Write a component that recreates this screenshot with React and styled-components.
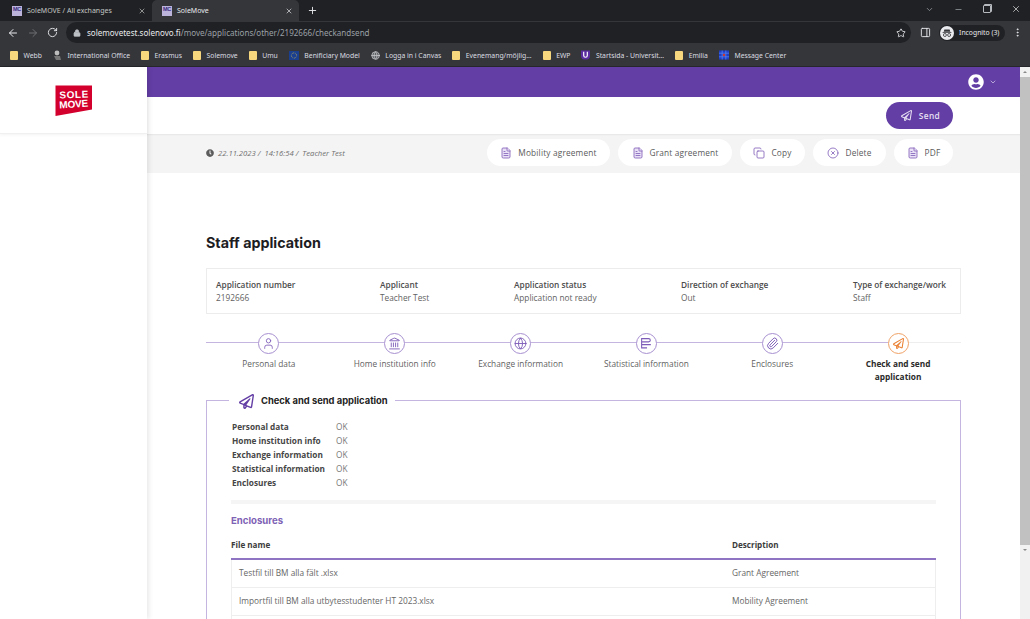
import React from 'react'
import styled, { createGlobalStyle } from 'styled-components'
import {
  ArrowLeft, ArrowRight, RotateCw, Star, Plus, X, Minus, ChevronDown, MoreVertical, Lock, Globe,
  FileText, Copy, CircleX, User, Landmark, Paperclip, PanelRight,
} from 'lucide-react'
import { FaRegPaperPlane, FaUserCircle, FaClock } from 'react-icons/fa'

const purple = '#633ea5'
const purpleLine = '#c4b5e0'

const bookmarks = [
  { name: 'Webb', icon: 'folder' },
  { name: 'International Office', icon: 'office' },
  { name: 'Erasmus', icon: 'folder' },
  { name: 'Solemove', icon: 'folder' },
  { name: 'Umu', icon: 'folder' },
  { name: 'Benificiary Model', icon: 'eu' },
  { name: 'Logga in i Canvas', icon: 'globe' },
  { name: 'Evenemang/möjlig...', icon: 'folder' },
  { name: 'EWP', icon: 'folder' },
  { name: 'Startsida - Universit...', icon: 'shield' },
  { name: 'Emilia', icon: 'folder' },
  { name: 'Message Center', icon: 'grid' },
]

const infoFields = [
  ['Application number', '2192666'],
  ['Applicant', 'Teacher Test'],
  ['Application status', 'Application not ready'],
  ['Direction of exchange', 'Out'],
  ['Type of exchange/work', 'Staff'],
]

const checks = ['Personal data', 'Home institution info', 'Exchange information', 'Statistical information', 'Enclosures']

const files = [
  ['Testfil till BM alla fält .xlsx', 'Grant Agreement'],
  ['Importfil till BM alla utbytesstudenter HT 2023.xlsx', 'Mobility Agreement'],
  ['', ''],
]

const actions = [
  { label: 'Mobility agreement', Icon: FileText, width: 123, fill: '#e9e2f6' },
  { label: 'Grant agreement', Icon: FileText, width: 114, fill: '#e9e2f6' },
  { label: 'Copy', Icon: Copy, width: 65, fill: 'none' },
  { label: 'Delete', Icon: CircleX, width: 73, fill: 'none' },
  { label: 'PDF', Icon: FileText, width: 59, fill: '#e9e2f6' },
]

function StatsIcon() {
  return (
    <svg width="13" height="13" viewBox="0 0 12 12" fill="none" stroke="currentColor" strokeWidth="1">
      <path d="M1.5 1.5h6.5a1.2 1.2 0 0 1 0 3H1.5zM1.5 4.5v6M1.5 7h8.5M1.5 10h5" />
    </svg>
  )
}

const steps = [
  { label: 'Personal data', Icon: () => <User size={13} strokeWidth={1.6} /> },
  { label: 'Home institution info', Icon: () => <Landmark size={13} strokeWidth={1.7} /> },
  { label: 'Exchange information', Icon: () => <Globe size={13} strokeWidth={1.7} /> },
  { label: 'Statistical information', Icon: StatsIcon },
  { label: 'Enclosures', Icon: () => <Paperclip size={13} strokeWidth={1.8} /> },
  { label: 'Check and send application', Icon: () => <FaRegPaperPlane size={11} />, current: true },
]

function Favicon() {
  return <FaviconBox>MC</FaviconBox>
}

function BookmarkIcon({ kind }) {
  if (kind === 'folder') return <FolderIcon />
  if (kind === 'globe') return <Globe size={9} color="#c9cacc" fill="#5f6368" />
  if (kind === 'office') {
    return (
      <svg width="9" height="11" viewBox="0 0 9 11" fill="#bdbdbd">
        <circle cx="4" cy="3" r="2.4" />
        <path d="M1 6h6l1 4H3z" fill="#777" />
      </svg>
    )
  }
  if (kind === 'eu') {
    return (
      <svg width="10" height="9" viewBox="0 0 10 9">
        <rect width="10" height="9" fill="#1b3f8f" />
        <circle cx="5" cy="4.5" r="2.6" fill="none" stroke="#d8c24a" strokeWidth="0.7" strokeDasharray="0.8 0.8" />
      </svg>
    )
  }
  if (kind === 'shield') {
    return (
      <svg width="9" height="10" viewBox="0 0 10 10">
        <path d="M0 0h10v6a5 4 0 0 1-10 0z" fill="#5a2ca0" />
        <path d="M3 1.5v4a2 2 0 0 0 4 0v-4" fill="none" stroke="#fff" strokeWidth="1.3" />
      </svg>
    )
  }
  return (
    <svg width="10" height="10" viewBox="0 0 11 10">
      <rect width="11" height="10" fill="#1d3fc4" />
      <path d="M0 3h11M0 7h11M3.5 0v10M7.5 0v10" stroke="#5f86f0" strokeWidth="0.8" />
      <circle cx="5.5" cy="5" r="1.3" fill="#d0392b" />
    </svg>
  )
}

function IncognitoIcon() {
  return (
    <svg width="14" height="14" viewBox="0 0 14 14">
      <circle cx="7" cy="7" r="7" fill="#e8eaed" />
      <path d="M4.4 3.4h5.2l.7 2.4H3.7zM2.6 6.2h8.8v.8H2.6z" fill="#35363a" />
      <circle cx="4.9" cy="9" r="1.5" fill="none" stroke="#35363a" strokeWidth="0.8" />
      <circle cx="9.1" cy="9" r="1.5" fill="none" stroke="#35363a" strokeWidth="0.8" />
    </svg>
  )
}

function Logo() {
  return (
    <svg width="38" height="32" viewBox="0 0 38 32">
      <path d="M0.5 0.5H37V24.5L0.5 31Z" fill="#d3002d" />
      <g fill="#fff" fontFamily="'Liberation Sans', sans-serif" fontWeight="700" fontSize="10" textAnchor="middle">
        <text x="19" y="13" transform="rotate(-2 19 13)" textLength="29">SOLE</text>
        <text x="19" y="22.5" transform="rotate(-4 19 22)" textLength="29">MOVE</text>
      </g>
    </svg>
  )
}

export default function App() {
  return (
    <Screen>
      <GlobalStyle />
      <TabStrip>
        <Tab>
          <Favicon />
          <TabTitle>SoleMOVE / All exchanges</TabTitle>
          <X size={8} strokeWidth={2} />
        </Tab>
        <Tab $active>
          <Favicon />
          <TabTitle>SoleMove</TabTitle>
          <X size={8} strokeWidth={2} />
        </Tab>
        <NewTab><Plus size={11} strokeWidth={2} /></NewTab>
        <WindowControls>
          <ChevronDown size={9} />
          <Minus size={9} />
          <RestoreIcon />
          <X size={10} color="#c4c7c5" />
        </WindowControls>
      </TabStrip>
      <Toolbar>
        <NavIcons>
          <ArrowLeft size={12} color="#e8eaed" strokeWidth={2} />
          <ArrowRight size={12} color="#6d6f73" strokeWidth={2} />
          <RotateCw size={11} color="#e8eaed" strokeWidth={2} />
        </NavIcons>
        <Omnibox>
          <Lock size={8} color="#bdc1c6" fill="#bdc1c6" />
          <Url><b>solemovetest.solenovo.fi</b>/move/applications/other/2192666/checkandsend</Url>
          <Star size={10} color="#e8eaed" />
        </Omnibox>
        <PanelRight size={11} color="#e8eaed" strokeWidth={2} />
        <IncognitoPill><IncognitoIcon />Incognito (3)</IncognitoPill>
        <MoreVertical size={11} color="#e8eaed" />
      </Toolbar>
      <BookmarkBar>
        {bookmarks.map((b) => (
          <Bookmark key={b.name}>
            <BookmarkIcon kind={b.icon} />
            {b.name}
          </Bookmark>
        ))}
      </BookmarkBar>

      <Page>
        <Sidebar>
          <LogoArea><Logo /></LogoArea>
        </Sidebar>
        <Main>
          <TopBar>
            <FaUserCircle size={16} color="#fff" />
            <ChevronDown size={8} color="#e0d8ef" strokeWidth={2} />
          </TopBar>
          <SendRow>
            <SendButton><FaRegPaperPlane size={11} />Send</SendButton>
          </SendRow>
          <ActionBar>
            <Stamp><FaClock size={8} color="#5c5c5c" />22.11.2023 / &nbsp;14:16:54 / &nbsp;Teacher Test</Stamp>
            <Actions>
              {actions.map(({ label, Icon, width, fill }) => (
                <ActionButton key={label} $width={width}>
                  <Icon size={12} color="#7d5cb8" fill={fill} strokeWidth={1.6} />
                  {label}
                </ActionButton>
              ))}
            </Actions>
          </ActionBar>
          <Content>
            <Title>Staff application</Title>
            <InfoBox>
              {infoFields.map(([label, value]) => (
                <div key={label}>
                  <InfoLabel>{label}</InfoLabel>
                  <InfoValue>{value}</InfoValue>
                </div>
              ))}
            </InfoBox>
            <Stepper>
              {steps.map(({ label, Icon, current }) => (
                <Step key={label}>
                  <StepTrack>
                    <Segment />
                    <StepCircle $current={current}><Icon /></StepCircle>
                    <Segment $todo={current} />
                  </StepTrack>
                  <StepLabel $current={current}>{label}</StepLabel>
                </Step>
              ))}
            </Stepper>
            <Panel>
              <PanelLegend>
                <FaRegPaperPlane size={15} color={purple} />
                Check and send application
              </PanelLegend>
              <CheckList>
                {checks.map((c) => (
                  <React.Fragment key={c}>
                    <CheckName>{c}</CheckName>
                    <CheckValue>OK</CheckValue>
                  </React.Fragment>
                ))}
              </CheckList>
              <Divider />
              <SectionTitle>Enclosures</SectionTitle>
              <TableHead>
                <span>File name</span>
                <span>Description</span>
              </TableHead>
              {files.map(([file, desc], i) => (
                <TableRow key={i}>
                  <span>{file}</span>
                  <span>{desc}</span>
                </TableRow>
              ))}
            </Panel>
          </Content>
        </Main>
        <Scrollbar>
          <ScrollArrow />
          <ScrollThumb />
          <ScrollArrow $down />
        </Scrollbar>
      </Page>
    </Screen>
  )
}

const GlobalStyle = createGlobalStyle`
  html, body {
    margin: 0;
    padding: 0;
    height: 100%;
    overflow: hidden;
    font-family: 'Open Sans', 'Liberation Sans', sans-serif;
  }
  #root {
    height: 100%;
  }
  * {
    box-sizing: border-box;
  }
`

const Screen = styled.div`
  display: flex;
  flex-direction: column;
  height: 100%;
  overflow: hidden;
  background: #fff;
`

const TabStrip = styled.div`
  display: flex;
  align-items: flex-end;
  flex: 0 0 21px;
  padding-left: 2px;
  background: #202124;
  color: #c4c7c5;
`

const Tab = styled.div`
  display: flex;
  align-items: center;
  gap: 5px;
  width: ${({ $active }) => ($active ? '147px' : '150px')};
  height: 21px;
  padding: 0 6px 0 10px;
  border-radius: 5px 5px 0 0;
  background: ${({ $active }) => ($active ? '#35363a' : 'transparent')};
  color: ${({ $active }) => ($active ? '#e8eaed' : '#c4c7c5')};
`

const FaviconBox = styled.span`
  flex: none;
  width: 10px;
  height: 10px;
  background: #bdb4dc;
  color: #3a2a80;
  font: 700 5.5px/7px 'Liberation Sans', sans-serif;
  letter-spacing: -0.3px;
  text-align: center;
  overflow: hidden;
`

const TabTitle = styled.span`
  flex: 1;
  font: 400 7px 'Noto Sans', sans-serif;
  white-space: nowrap;
`

const NewTab = styled.div`
  display: flex;
  align-items: center;
  height: 21px;
  margin-left: 8px;
  color: #e8eaed;
`

const WindowControls = styled.div`
  display: flex;
  align-items: center;
  gap: 20px;
  height: 18px;
  margin-left: auto;
  margin-right: 9px;
  align-self: flex-start;
  color: #9aa0a6;
`

const RestoreIcon = styled.span`
  width: 8px;
  height: 8px;
  border: 1px solid #b6b9bd;
  border-radius: 1px;
  box-shadow: 1px -1px 0 0 #b6b9bd;
`

const Toolbar = styled.div`
  display: flex;
  align-items: center;
  flex: 0 0 23px;
  padding-right: 7px;
  background: #35363a;
`

const NavIcons = styled.div`
  display: flex;
  align-items: center;
  gap: 8px;
  width: 66px;
  padding-left: 7px;
`

const Omnibox = styled.div`
  display: flex;
  align-items: center;
  gap: 6px;
  width: 846px;
  height: 21px;
  margin-right: 9px;
  padding: 0 5px 0 7px;
  border-radius: 11px;
  background: #202124;
`

const Url = styled.span`
  flex: 1;
  color: #9aa0a6;
  font: 400 8.07px 'Noto Sans', sans-serif;
  white-space: nowrap;

  b {
    color: #e8eaed;
    font-weight: 400;
  }
`

const IncognitoPill = styled.div`
  display: flex;
  align-items: center;
  gap: 5px;
  width: 66px;
  height: 16px;
  margin: 0 7px 0 8px;
  padding-left: 1px;
  border-radius: 8px;
  background: #202124;
  color: #e8eaed;
  font: 400 6.8px 'Noto Sans', sans-serif;
  white-space: nowrap;
`

const BookmarkBar = styled.div`
  display: flex;
  align-items: center;
  gap: 11px;
  flex: 0 0 23px;
  padding-left: 10px;
  background: #35363a;
  border-bottom: 1px solid #26272a;
`

const Bookmark = styled.div`
  display: flex;
  align-items: center;
  gap: 5.5px;
  color: #dadce0;
  font: 400 6.83px 'Noto Sans', sans-serif;
  white-space: nowrap;
`

const FolderIcon = styled.span`
  width: 8px;
  height: 9px;
  border-radius: 1px;
  background: #f6d77e;
`

const Page = styled.div`
  display: flex;
  flex: 1;
  min-height: 0;
`

const Sidebar = styled.aside`
  position: relative;
  z-index: 2;
  flex: 0 0 147px;
  background: #fff;
  box-shadow: 2px 0 5px rgba(0, 0, 0, 0.09);
`

const LogoArea = styled.div`
  display: flex;
  justify-content: center;
  height: 67px;
  padding: 18px 0 0 1px;
  border-bottom: 1px solid #f0f0f0;
  box-shadow: 0 1px 3px rgba(0, 0, 0, 0.05);
`

const Main = styled.main`
  flex: 1;
  min-width: 0;
  overflow: hidden;
`

const TopBar = styled.div`
  display: flex;
  align-items: center;
  justify-content: flex-end;
  gap: 5px;
  height: 30px;
  padding-right: 23px;
  background: ${purple};
`

const SendRow = styled.div`
  display: flex;
  justify-content: flex-end;
  height: 37px;
  padding: 5px 67px 0 0;
  background: #fff;
`

const SendButton = styled.div`
  display: flex;
  align-items: center;
  justify-content: center;
  gap: 7px;
  width: 67px;
  height: 27px;
  padding-left: 2px;
  border-radius: 14px;
  background: ${purple};
  color: #e6e0f2;
  font-size: 8.3px;
  font-weight: 600;
  letter-spacing: 0.4px;
`

const ActionBar = styled.div`
  display: flex;
  align-items: flex-start;
  justify-content: space-between;
  height: 39px;
  padding: 5px 67px 0 59px;
  background: #f4f4f4;
  box-shadow: inset 0 2px 2px -1px rgba(0, 0, 0, 0.06);
`

const Stamp = styled.div`
  display: flex;
  align-items: center;
  gap: 4px;
  height: 27px;
  color: #6f6f6f;
  font-size: 7.7px;
  font-style: italic;
`

const Actions = styled.div`
  display: flex;
  gap: 8px;
`

const ActionButton = styled.div`
  display: flex;
  align-items: center;
  justify-content: center;
  gap: 6px;
  width: ${({ $width }) => $width}px;
  height: 27px;
  border-radius: 14px;
  background: #fff;
  color: #5a5a5a;
  font-size: 8.3px;
  letter-spacing: 0.17px;
  white-space: nowrap;
`

const Content = styled.div`
  padding: 60px 59px 0;
`

const Title = styled.h1`
  margin: 0 0 16px;
  color: #1d1d1f;
  font: 700 14.3px/19px Inter, 'Liberation Sans', sans-serif;
`

const InfoBox = styled.div`
  display: grid;
  grid-template-columns: 164px 134px 167px 172px 1fr;
  height: 46px;
  padding: 9px 0 0 9px;
  border: 1px solid #ececec;
`

const InfoLabel = styled.div`
  color: #4c4c4c;
  font-size: 8.3px;
  font-weight: 600;
  line-height: 13px;
  white-space: nowrap;
`

const InfoValue = styled.div`
  color: #626262;
  font-size: 8.3px;
  line-height: 13px;
  white-space: nowrap;
`

const Stepper = styled.div`
  display: grid;
  grid-template-columns: repeat(6, 1fr);
  height: 76px;
  padding-top: 19px;
`

const Step = styled.div`
  display: flex;
  flex-direction: column;
  align-items: center;
`

const StepTrack = styled.div`
  display: flex;
  align-items: center;
  width: 100%;
  height: 21px;
`

const Segment = styled.span`
  flex: 1;
  height: 1px;
  margin-top: -2px;
  background: ${({ $todo }) => ($todo ? '#eeeeee' : purpleLine)};
`

const StepCircle = styled.span`
  display: flex;
  flex: none;
  align-items: center;
  justify-content: center;
  width: 21px;
  height: 21px;
  border: 1px solid ${({ $current }) => ($current ? '#f0a266' : '#a78fd0')};
  border-radius: 50%;
  color: ${({ $current }) => ($current ? '#ea8033' : '#7d5cb8')};
`

const StepLabel = styled.div`
  width: 100px;
  margin-top: 3px;
  color: ${({ $current }) => ($current ? '#2b2b2b' : '#5f5f5f')};
  font-size: 8.3px;
  font-weight: ${({ $current }) => ($current ? 700 : 400)};
  line-height: 13px;
  text-align: center;
`

const Panel = styled.fieldset`
  margin: 0;
  min-width: 0;
  padding: 9px 24px 0;
  border: 1px solid ${purpleLine};
  border-bottom: 0;
`

const PanelLegend = styled.legend`
  display: flex;
  align-items: center;
  gap: 7px;
  margin-left: -2px;
  padding: 2px 7px 0 10px;
  color: #232323;
  font: 700 9.4px/18px Inter, 'Liberation Sans', sans-serif;
`

const CheckList = styled.div`
  display: grid;
  grid-template-columns: 104px 1fr;
  grid-auto-rows: 14px;
  align-items: center;
  margin-left: 1px;
`

const CheckName = styled.div`
  color: #464646;
  font-size: 8.25px;
  font-weight: 700;
  white-space: nowrap;
`

const CheckValue = styled.div`
  color: #777;
  font-size: 8.25px;
`

const Divider = styled.div`
  height: 4px;
  margin: 11px 0 0;
  background: #f5f5f5;
`

const SectionTitle = styled.h2`
  margin: 10px 0 0;
  color: #7e62b5;
  font: 700 9.6px/14px Inter, 'Liberation Sans', sans-serif;
`

const TableHead = styled.div`
  display: grid;
  grid-template-columns: 501px 1fr;
  height: 32px;
  padding-top: 10px;
  border-bottom: 2px solid #8f74c4;
  color: #3c3c3c;
  font-size: 8.1px;
  font-weight: 700;
  line-height: 13px;
`

const TableRow = styled.div`
  display: grid;
  grid-template-columns: 493px 1fr;
  align-items: center;
  height: 28px;
  padding: 0 0 2px 7px;
  border: 1px solid #eeeeee;
  border-top: 0;
  color: #666;
  font-size: 8.3px;
`

const Scrollbar = styled.div`
  display: flex;
  flex: 0 0 10px;
  flex-direction: column;
  background: #f1f1f1;
`

const ScrollArrow = styled.div`
  flex: 0 0 10px;
  display: flex;
  justify-content: center;
  align-items: center;

  &::before {
    content: '';
    border-left: 2px solid transparent;
    border-right: 2px solid transparent;
    ${({ $down }) => ($down ? 'border-top' : 'border-bottom')}: 2px solid #8a8a8a;
  }
`

const ScrollThumb = styled.div`
  flex: 0 0 468px;
  background: #c1c1c1;
`
